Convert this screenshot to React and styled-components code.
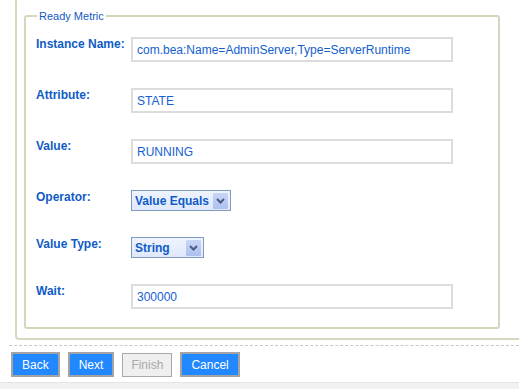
import styled, { createGlobalStyle } from 'styled-components';

const fields = [
  { label: 'Instance Name:', value: 'com.bea:Name=AdminServer,Type=ServerRuntime' },
  { label: 'Attribute:', value: 'STATE' },
  { label: 'Value:', value: 'RUNNING' },
  { label: 'Operator:', select: 'Value Equals', width: 100 },
  { label: 'Value Type:', select: 'String', width: 73 },
  { label: 'Wait:', value: '300000' },
];

const Chevron = () => (
  <svg width="9" height="6" viewBox="0 0 9 6">
    <path d="M1 1 L4.5 4.5 L8 1" fill="none" stroke="#4a5c80" strokeWidth="2" />
  </svg>
);

const App = () => (
  <>
    <GlobalStyle />
    <Page>
      <Outer>
        <Fieldset>
          <Legend>Ready Metric</Legend>
          <Grid>
            {fields.map((f) => (
              <Row key={f.label}>
                <Label>{f.label}</Label>
                {f.select ? (
                  <Select $w={f.width}>
                    <SelectText>{f.select}</SelectText>
                    <ArrowBtn>
                      <Chevron />
                    </ArrowBtn>
                  </Select>
                ) : (
                  <Input readOnly value={f.value} />
                )}
              </Row>
            ))}
          </Grid>
        </Fieldset>
      </Outer>
      <Divider />
      <Buttons>
        <Button>Back</Button>
        <Button>Next</Button>
        <Button disabled>Finish</Button>
        <Button>Cancel</Button>
      </Buttons>
    </Page>
    <Footer />
  </>
);

const GlobalStyle = createGlobalStyle`
  body {
    margin: 0;
    background: #fff;
    font-family: "Liberation Sans", Arial, sans-serif;
    overflow: hidden;
  }
`;

const Page = styled.div`
  padding-left: 9px;
`;

const Outer = styled.div`
  margin-left: 6px;
  border-left: 2px solid #d8d8c0;
  border-bottom: 2px solid #d8d8c0;
  border-bottom-left-radius: 4px;
  padding: 10px 19px 9px 7px;
`;

const Fieldset = styled.fieldset`
  margin: 0;
  border: 2px solid #d6d6bc;
  border-radius: 3px;
  padding: 15px 10px 18px 10px;
`;

const Legend = styled.legend`
  margin-left: 1px;
  padding: 0 2px;
  font-size: 11px;
  line-height: 12px;
  color: #1458c4;
`;

const Grid = styled.div`
  display: flex;
  flex-direction: column;
  gap: 26px;
`;

const Row = styled.div`
  display: grid;
  grid-template-columns: 95px auto;
  align-items: start;
`;

const Label = styled.div`
  font-size: 12px;
  font-weight: bold;
  line-height: 14px;
  color: #0f5cc6;
`;

const Input = styled.input`
  box-sizing: border-box;
  width: 322px;
  height: 25px;
  border: 2px solid #dcdcdc;
  padding: 0 4px;
  font-family: "Liberation Sans", Arial, sans-serif;
  font-size: 12px;
  color: #1460d0;
  background: #fff;
  outline: none;
`;

const Select = styled.div`
  box-sizing: border-box;
  width: ${(p) => p.$w}px;
  height: 21px;
  display: flex;
  align-items: center;
  justify-content: space-between;
  border: 1px solid #7f9bc0;
  background: linear-gradient(#eef3fd, #dfe8fb);
  padding: 0 2px 0 3px;
`;

const SelectText = styled.span`
  font-size: 12px;
  font-weight: bold;
  color: #0f5cc6;
`;

const ArrowBtn = styled.span`
  width: 15px;
  height: 16px;
  display: flex;
  align-items: center;
  justify-content: center;
  background: linear-gradient(#c8d6f6, #adc0ee);
  border-radius: 1px;
`;

const Divider = styled.div`
  margin-top: 5px;
  border-top: 1px dashed #c8c8c8;
`;

const Buttons = styled.div`
  display: flex;
  gap: 8px;
  padding: 6px 0 0 2px;
`;

const Button = styled.button`
  box-sizing: border-box;
  height: 25px;
  padding: 0 9px;
  border: 2px solid #a4a4a4;
  background: #2288ff;
  color: #fff;
  font-family: "Liberation Sans", Arial, sans-serif;
  font-size: 12px;
  &:disabled {
    margin-top: 1px;
    height: 24px;
    border: 1px solid #a8a8a8;
    background: #efefef;
    color: #a8a8a8;
    padding: 0 8px;
  }
`;

const Footer = styled.div`
  margin-top: 5px;
  height: 10px;
  border-top: 1px solid #e4e4e4;
  background: #f1f1f1;
`;

export default App;
